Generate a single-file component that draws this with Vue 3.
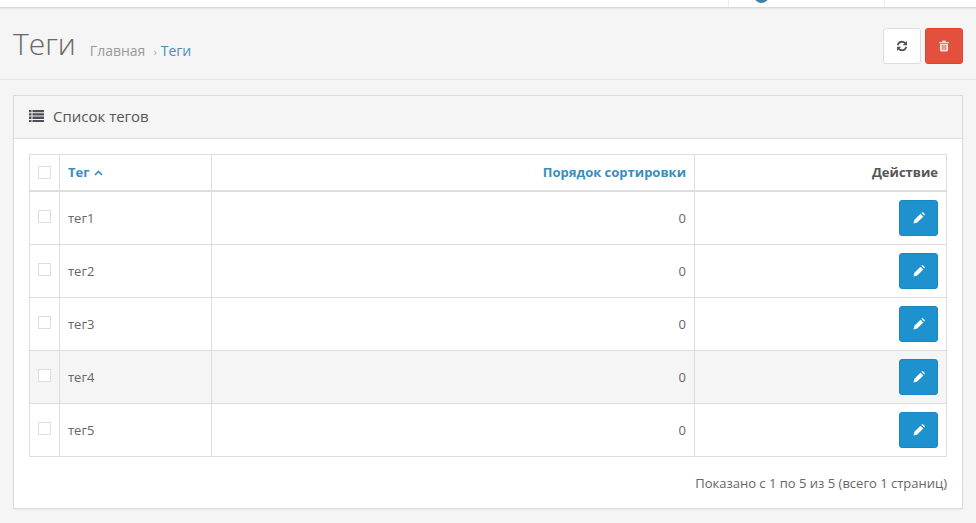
<script setup>
const tags = [
  { id: 1, name: 'тег1', sort: 0 },
  { id: 2, name: 'тег2', sort: 0 },
  { id: 3, name: 'тег3', sort: 0 },
  { id: 4, name: 'тег4', sort: 0 },
  { id: 5, name: 'тег5', sort: 0 },
];
</script>

<template>
  <div class="page">
    <header class="topbar">
      <div class="user-cell">
        <span class="avatar"></span>
      </div>
    </header>

    <div class="page-header">
      <div class="title-wrap">
        <h1>Теги</h1>
        <ul class="breadcrumb">
          <li><a class="muted">Главная</a></li>
          <li class="sep">›</li>
          <li><a>Теги</a></li>
        </ul>
      </div>
      <div class="actions">
        <button class="btn btn-default" aria-label="Обновить">
          <svg width="12" height="12" viewBox="0 0 24 24" fill="none" stroke="#555" stroke-width="3.6">
            <path d="M3.5 10.5C4.6 6.2 8 3.5 12 3.5c2.7 0 5 1.2 6.6 3.2" />
            <path d="M20.5 13.5c-1.1 4.3-4.5 7-8.5 7-2.7 0-5-1.2-6.6-3.2" />
            <path d="M22 2v8.5h-8.5z" fill="#555" stroke="none" />
            <path d="M2 22v-8.5h8.5z" fill="#555" stroke="none" />
          </svg>
        </button>
        <button class="btn btn-danger" aria-label="Удалить">
          <svg width="10" height="12" viewBox="0 0 22 24" fill="#fbdcd7">
            <path d="M8 0h6l1.5 3H21a1 1 0 0 1 1 1v1.5H0V4a1 1 0 0 1 1-1h5.5z" />
            <path fill-rule="evenodd" d="M2 7h18v14.5a2.5 2.5 0 0 1-2.500 2.500h-13A2.500 2.500 0 0 1 2 21.500zM6.500 10v10.500h1.600V10zm3.700 0v10.500h1.600V10zm3.700 0v10.500h1.600V10z" />
          </svg>
        </button>
      </div>
    </div>

    <section class="panel">
      <div class="panel-heading">
        <svg class="list-icon" width="15" height="12" viewBox="0 0 15 12" fill="#4d4d5a">
          <path d="M0 0h2.500v2.200H0zM3.500 0H15v2.200H3.500zM0 3.200h2.500v2.400H0zM3.500 3.200H15v2.400H3.500zM0 6.600h2.500V9H0zM3.500 6.600H15V9H3.500zM0 10h2.500v2H0zM3.500 10H15v2H3.500z" />
        </svg>
        <h3>Список тегов</h3>
      </div>
      <div class="panel-body">
        <table class="tag-table">
          <colgroup>
            <col class="col-check" />
            <col class="col-name" />
            <col />
            <col class="col-action" />
          </colgroup>
          <thead>
            <tr>
              <th class="center"><span class="check"></span></th>
              <th>
                <a class="sort">Тег
                  <svg width="9" height="6" viewBox="0 0 9 6" fill="none" stroke="#3a8dbf" stroke-width="1.700">
                    <path d="M1 5l3.500-3.500L8 5" />
                  </svg>
                </a>
              </th>
              <th class="right"><a class="sort">Порядок сортировки</a></th>
              <th class="right">Действие</th>
            </tr>
          </thead>
          <tbody>
            <tr v-for="tag in tags" :key="tag.id" :class="{ hovered: tag.id === 4 }">
              <td class="center"><span class="check check-row"></span></td>
              <td>{{ tag.name }}</td>
              <td class="right">{{ tag.sort }}</td>
              <td class="right">
                <button class="btn btn-primary" aria-label="Редактировать">
                  <svg width="12" height="12" viewBox="0 0 24 24" fill="#fff">
                    <path d="M1 23l1.800-7.500L15 3.300 20.700 9 8.500 21.200zM16.800 1.500l.6-.5c1-.8 2.200-.7 3 .1l2.600 2.600c.8.800.8 2 0 2.900l-.5.500z" />
                  </svg>
                </button>
              </td>
            </tr>
          </tbody>
        </table>
        <div class="results">Показано с 1 по 5 из 5 (всего 1 страниц)</div>
      </div>
    </section>
  </div>
</template>

<style>
body {
  background: #f5f5f5;
  overflow: hidden;
}
</style>

<style scoped>
.page {
  height: 523px;
  overflow: hidden;
  background: #f5f5f5;
  font-family: "Open Sans", "Noto Sans", sans-serif;
  font-size: 13px;
  color: #666;
}

.topbar {
  height: 7px;
  background: #fff;
  border-bottom: 1px solid #d8d8d8;
  box-shadow: 0 1px 2px rgba(0, 0, 0, 0.08);
  display: flex;
  justify-content: flex-end;
  overflow: hidden;
}

.user-cell {
  box-sizing: border-box;
  width: 157px;
  margin-right: 91px;
  border-left: 1px solid #eee;
  border-right: 1px solid #eee;
  padding-left: 25px;
}

.avatar {
  display: block;
  width: 15px;
  height: 15px;
  margin-top: -12px;
  border-radius: 50%;
  background: #3f7fa8;
}

.page-header {
  height: 72px;
  box-sizing: border-box;
  padding: 18px 13px 0;
  border-bottom: 1px solid #e5e5e5;
  display: flex;
  justify-content: space-between;
  align-items: flex-start;
}

.title-wrap {
  display: flex;
  align-items: flex-start;
}

h1 {
  margin: 0;
  font-size: 30px;
  line-height: 36px;
  font-weight: 300;
  color: #666;
}

.breadcrumb {
  display: flex;
  align-items: baseline;
  list-style: none;
  margin: 15px 0 0 14px;
  padding: 0;
  font-size: 14px;
  color: #4a8fb8;
}

.muted {
  color: #999;
}

.sep {
  margin: 0 4px 0 8px;
  color: #aaa;
  font-size: 11px;
}

.actions {
  display: flex;
  gap: 4px;
  margin-top: 2px;
}

.actions .btn {
  width: 38px;
  height: 36px;
}

.btn {
  display: inline-flex;
  align-items: center;
  justify-content: center;
  padding: 0;
  border-radius: 3px;
  cursor: pointer;
  box-sizing: border-box;
}

.btn-default {
  background: #fff;
  border: 1px solid #ddd;
}

.btn-danger {
  background: #e3503e;
  border: 1px solid #e0442f;
}

.btn-primary {
  width: 39px;
  height: 36px;
  background: #1e91cf;
  border: 1px solid #1b86bf;
}

.panel {
  margin: 15px 13px 0;
  height: 414px;
  box-sizing: border-box;
  background: #fff;
  border: 1px solid #dbdbdb;
  box-shadow: 0 1px 1px rgba(0, 0, 0, 0.05);
}

.panel-heading {
  height: 43px;
  box-sizing: border-box;
  padding: 0 15px 2px;
  background: #f5f5f5;
  border-bottom: 1px solid #dbdbdb;
  display: flex;
  align-items: center;
  gap: 9px;
}

h3 {
  margin: 0;
  font-size: 15px;
  font-weight: 400;
  color: #555;
}

.panel-body {
  padding: 15px 15px 0;
}

.tag-table {
  width: 918px;
  table-layout: fixed;
  border-collapse: collapse;
  border: 1px solid #ddd;
}

.col-check {
  width: 30px;
}

.col-name {
  width: 152px;
}

.col-action {
  width: 252px;
}

th,
td {
  border: 1px solid #ddd;
  padding: 0 8px;
  text-align: left;
}

th {
  height: 33px;
  padding-bottom: 2px;
  border-bottom-width: 2px;
  font-weight: 700;
  color: #555;
}

td {
  height: 53px;
  box-sizing: border-box;
}

.center {
  padding: 0;
  text-align: center;
}

.right {
  text-align: right;
}

.sort {
  color: #3a8dbf;
}

.sort svg {
  margin-left: 1px;
  vertical-align: 1px;
}

.check {
  display: inline-block;
  box-sizing: border-box;
  width: 13px;
  height: 13px;
  vertical-align: middle;
  border: 1px solid #ddd;
  background: #fff;
  margin-top: -4px;
}

.check-row {
  margin-top: -5px;
}

.hovered td {
  background: #f5f5f5;
}

.results {
  margin-top: 17px;
  text-align: right;
  line-height: 18px;
}
</style>
